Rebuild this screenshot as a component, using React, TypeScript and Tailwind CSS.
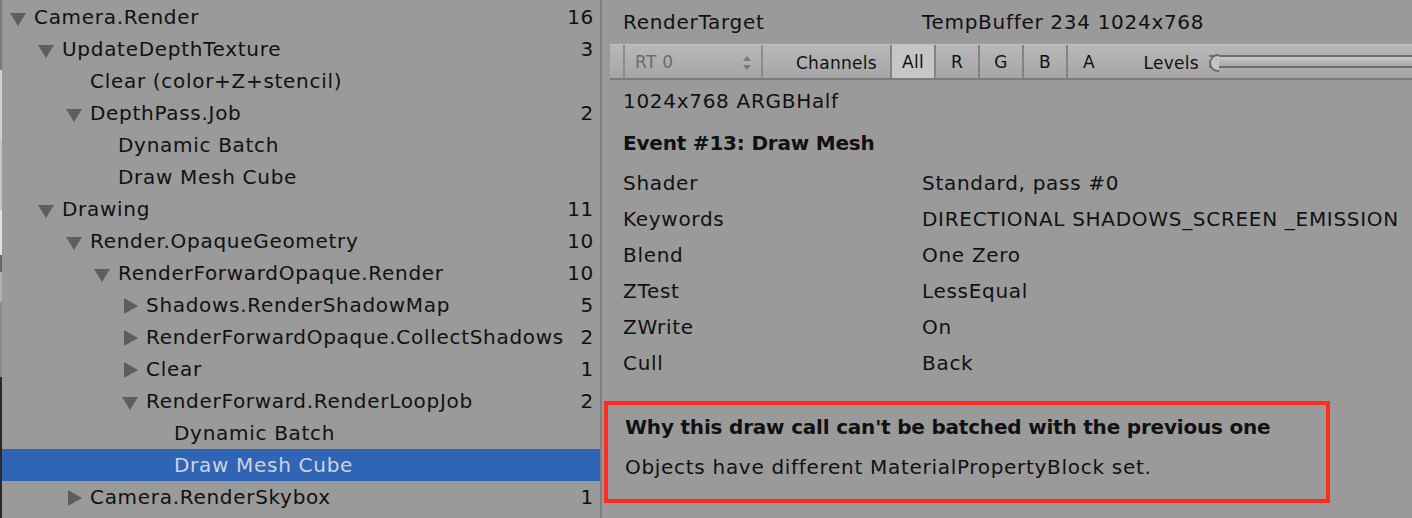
const rows: { label: string; level: number; arrow?: 'down' | 'right'; count?: string; selected?: boolean }[] = [
  { label: 'Camera.Render', level: 0, arrow: 'down', count: '16' },
  { label: 'UpdateDepthTexture', level: 1, arrow: 'down', count: '3' },
  { label: 'Clear (color+Z+stencil)', level: 2 },
  { label: 'DepthPass.Job', level: 2, arrow: 'down', count: '2' },
  { label: 'Dynamic Batch', level: 3 },
  { label: 'Draw Mesh Cube', level: 3 },
  { label: 'Drawing', level: 1, arrow: 'down', count: '11' },
  { label: 'Render.OpaqueGeometry', level: 2, arrow: 'down', count: '10' },
  { label: 'RenderForwardOpaque.Render', level: 3, arrow: 'down', count: '10' },
  { label: 'Shadows.RenderShadowMap', level: 4, arrow: 'right', count: '5' },
  { label: 'RenderForwardOpaque.CollectShadows', level: 4, arrow: 'right', count: '2' },
  { label: 'Clear', level: 4, arrow: 'right', count: '1' },
  { label: 'RenderForward.RenderLoopJob', level: 4, arrow: 'down', count: '2' },
  { label: 'Dynamic Batch', level: 5 },
  { label: 'Draw Mesh Cube', level: 5, selected: true },
  { label: 'Camera.RenderSkybox', level: 2, arrow: 'right', count: '1' },
]

const props = [
  ['Shader', 'Standard, pass #0'],
  ['Keywords', 'DIRECTIONAL SHADOWS_SCREEN _EMISSION'],
  ['Blend', 'One Zero'],
  ['ZTest', 'LessEqual'],
  ['ZWrite', 'On'],
  ['Cull', 'Back'],
]

const indents = ['pl-[34px]', 'pl-[62px]', 'pl-[90px]', 'pl-[118px]', 'pl-[146px]', 'pl-[174px]']

function Arrow({ dir }: { dir: 'down' | 'right' }) {
  return dir === 'down' ? (
    <svg className="absolute -left-[24px] top-[10px]" width="16" height="14" viewBox="0 0 16 14">
      <polygon points="0,1 16,1 8,14" fill="#5e5e5e" />
    </svg>
  ) : (
    <svg className="absolute -left-[23px] top-[8px]" width="16" height="16" viewBox="0 0 16 16">
      <polygon points="1,0 15,8 1,16" fill="#5e5e5e" />
    </svg>
  )
}

function TreeRow({ row }: { row: (typeof rows)[number] }) {
  return (
    <div
      className={`flex h-[32px] items-center pr-[6px] ${indents[row.level]} ${
        row.selected ? 'bg-[#3064b4] text-[#cdd3dc]' : 'text-[#111]'
      }`}
    >
      <span className="relative">
        {row.arrow && <Arrow dir={row.arrow} />}
        {row.label}
      </span>
      <span className="ml-auto">{row.count}</span>
    </div>
  )
}

function ToolButton({ label, active }: { label: string; active?: boolean }) {
  return (
    <div
      className={`flex h-full w-[44px] items-center justify-center border-l-2 border-[#828282] pt-[2px] ${
        active ? 'bg-[#c6c6c6]' : ''
      }`}
    >
      {label}
    </div>
  )
}

export default function App() {
  return (
    <div
      className="flex h-[518px] w-[1412px] overflow-hidden bg-[#9a9a9a] text-[20px] tracking-[0.7px] text-[#111]"
      style={{ fontFamily: '"DejaVu Sans", sans-serif' }}
    >
      {/* left edge strip */}
      <div className="relative z-10 flex w-[2px] shrink-0 flex-col">
        <div className="h-[70px] bg-[#7c7c7c]" />
        <div className="h-[70px] bg-[#cfcfcf]" />
        <div className="h-[70px] bg-[#c6c6bf]" />
        <div className="h-[45px] bg-[#e2e2e2]" />
        <div className="h-[17px] bg-[#666]" />
        <div className="h-[30px] bg-[#b0b0b0]" />
        <div className="h-[75px] bg-[#8a8a8a]" />
        <div className="flex-1 bg-[#2a2a2a]" />
      </div>

      {/* event tree */}
      <div className="-ml-[2px] w-[600px] shrink-0 pt-[1px]">
        {rows.map((r, i) => (
          <TreeRow key={i} row={r} />
        ))}
      </div>

      <div className="w-[2px] shrink-0 bg-[#7e7e7e]" />

      {/* details */}
      <div className="flex-1">
        <div className="flex h-[44px] items-center pl-[21px]">
          <span className="w-[299px]">RenderTarget</span>
          <span>TempBuffer 234 1024x768</span>
        </div>

        <div className="ml-[8px] flex h-[36px] items-stretch border-t border-b-2 border-t-[#c2c2c2] border-b-[#7c7c7c] bg-gradient-to-b from-[#b8b8b8] to-[#a6a6a6] text-[17px] tracking-[0.3px]">
          <div className="w-[13px]" />
          <div className="flex w-[140px] items-center justify-between border-x-2 border-[#8c8c8c] pl-[10px] pr-[10px] pt-[2px] text-[#6b6b6b]">
            <span>RT 0</span>
            <svg width="8" height="14" viewBox="0 0 8 14">
              <polygon points="0,5 8,5 4,0" fill="#7a7a7a" />
              <polygon points="0,9 8,9 4,14" fill="#7a7a7a" />
            </svg>
          </div>
          <div className="flex w-[127px] items-center justify-end pr-[13px] pt-[4px]">Channels</div>
          <ToolButton label="All" active />
          <ToolButton label="R" />
          <ToolButton label="G" />
          <ToolButton label="B" />
          <ToolButton label="A" />
          <div className="flex w-[99px] items-center justify-end pr-[10px] pt-[4px]">Levels</div>
          <div className="relative flex flex-1 items-center">
            <div className="h-[13px] w-full border-y-2 border-[#6e6e6e] bg-gradient-to-b from-[#c8c8c8] to-[#a8a8a8]" />
            <div className="absolute left-0 top-[9px] h-[18px] w-[10px] rounded-l-full border-2 border-r-0 border-[#6a6a6a] bg-[#c4c4c4]" />
          </div>
        </div>

        <div className="flex h-[40px] items-center pl-[21px] pt-[2px]">1024x768 ARGBHalf</div>
        <div className="flex h-[44px] items-center pl-[21px] pt-[2px] font-bold tracking-[-0.2px]">Event #13: Draw Mesh</div>
        <div className="pl-[21px] pt-[1px]">
          {props.map(([k, v]) => (
            <div key={k} className="flex h-[36px] items-center">
              <span className="w-[299px]">{k}</span>
              <span>{v}</span>
            </div>
          ))}
        </div>

        <div className="ml-[2px] mt-[20px] h-[102px] w-[726px] border-[4px] border-[#ff2b1f] pl-[17px]">
          <div className="flex h-[42px] items-center pt-[2px] font-bold tracking-[-0.2px]">
            Why this draw call can't be batched with the previous one
          </div>
          <div className="flex h-[40px] items-center">Objects have different MaterialPropertyBlock set.</div>
        </div>
      </div>
    </div>
  )
}
